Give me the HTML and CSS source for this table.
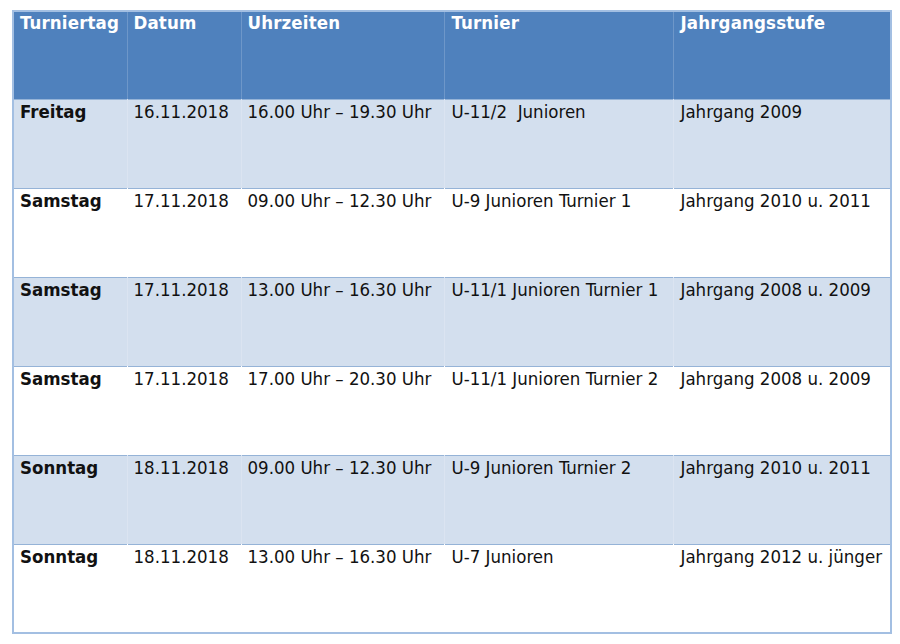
FILE: index.html
```html
<!DOCTYPE html>
<html lang="de">
<head>
<meta charset="utf-8">
<title>Turnierplan</title>
<link rel="stylesheet" href="styles.css">
</head>
<body>
<table class="plan">
  <colgroup>
    <col class="c1"><col class="c2"><col class="c3"><col class="c4"><col class="c5">
  </colgroup>
  <thead>
    <tr class="head">
      <th>Turniertag</th><th>Datum</th><th>Uhrzeiten</th><th>Turnier</th><th>Jahrgangsstufe</th>
    </tr>
  </thead>
  <tbody>
    <tr class="band">
      <td class="day">Freitag</td><td>16.11.2018</td><td>16.00 Uhr – 19.30 Uhr</td><td>U-11/2&nbsp; Junioren</td><td>Jahrgang 2009</td>
    </tr>
    <tr>
      <td class="day">Samstag</td><td>17.11.2018</td><td>09.00 Uhr – 12.30 Uhr</td><td>U-9 Junioren Turnier 1</td><td>Jahrgang 2010 u. 2011</td>
    </tr>
    <tr class="band">
      <td class="day">Samstag</td><td>17.11.2018</td><td>13.00 Uhr – 16.30 Uhr</td><td>U-11/1 Junioren Turnier 1</td><td>Jahrgang 2008 u. 2009</td>
    </tr>
    <tr>
      <td class="day">Samstag</td><td>17.11.2018</td><td>17.00 Uhr – 20.30 Uhr</td><td>U-11/1 Junioren Turnier 2</td><td>Jahrgang 2008 u. 2009</td>
    </tr>
    <tr class="band">
      <td class="day">Sonntag</td><td>18.11.2018</td><td>09.00 Uhr – 12.30 Uhr</td><td>U-9 Junioren Turnier 2</td><td>Jahrgang 2010 u. 2011</td>
    </tr>
    <tr>
      <td class="day">Sonntag</td><td>18.11.2018</td><td>13.00 Uhr – 16.30 Uhr</td><td>U-7 Junioren</td><td>Jahrgang 2012 u. jünger</td>
    </tr>
  </tbody>
</table>
</body>
</html>
```
FILE: styles.css
```css
html, body {
  margin: 0;
  padding: 0;
  background: #ffffff;
}

body {
  padding: 10px 0 0 12px;
}

.plan {
  border-collapse: collapse;
  table-layout: fixed;
  width: 878px;
  font-family: "DejaVu Sans Condensed", "DejaVu Sans", sans-serif;
  font-size: 18.5px;
  line-height: 22px;
  color: #111111;
  border: 2px solid #a3bfe2;
}

.c1 { width: 114px; }
.c2 { width: 114px; }
.c3 { width: 203px; }
.c4 { width: 229px; }
.c5 { width: 218px; }

.plan th,
.plan td {
  height: 89px;
  box-sizing: border-box;
  vertical-align: top;
  text-align: left;
  padding: 1px 2px 0 6px;
  white-space: nowrap;
  overflow: visible;
  border-left: 1px solid rgba(255, 255, 255, 0.18);
  border-right: 1px solid rgba(255, 255, 255, 0.18);
}

.plan td:nth-child(4),
.plan th:nth-child(4),
.plan td:nth-child(5),
.plan th:nth-child(5) {
  padding-left: 7px;
}

.plan th:first-child,
.plan td:first-child {
  border-left: 2px solid #a3bfe2;
}

.plan th:last-child,
.plan td:last-child {
  border-right: 2px solid #a3bfe2;
}

.plan tbody tr {
  border-top: 1px solid #95b3d7;
}

.head th {
  height: 88px;
  background: #4f81bd;
  color: #ffffff;
  font-weight: bold;
  line-height: 20px;
  letter-spacing: 0.15px;
}

.band td {
  background: #d3dfee;
}

.day {
  font-weight: bold;
}
```
